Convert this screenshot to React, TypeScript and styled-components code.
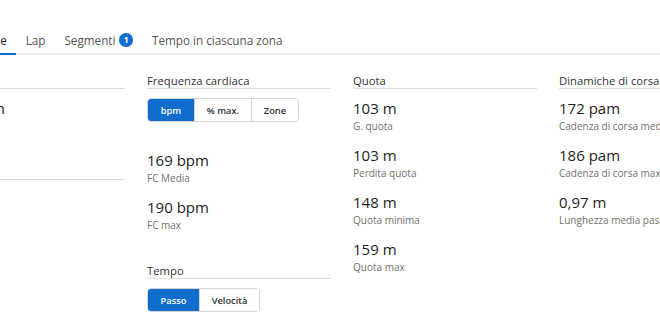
import React from "react";
import styled, { createGlobalStyle } from "styled-components";

const Global = createGlobalStyle`
  html, body { margin: 0; padding: 0; background: #fff; overflow: hidden; }
  body { font-family: "Open Sans", "Noto Sans", sans-serif; color: #222; }
`;

const BLUE = "#0e6dcd";

const Page = styled.div`
  width: 660px;
  height: 330px;
  overflow: hidden;
`;

const Inner = styled.div`
  margin-left: -59px;
  width: max-content;
  padding-top: 32px;
`;

const TabBar = styled.nav`
  display: flex;
  border-bottom: 2px solid #ececec;
  width: 1000px;
`;

const Tab = styled.div<{ $active?: boolean }>`
  display: flex;
  align-items: center;
  gap: 4px;
  padding: 0 9.5px 5px;
  margin-bottom: -2px;
  font-size: 11.7px;
  line-height: 16px;
  color: ${(p) => (p.$active ? "#222" : "#555")};
  border-bottom: 2px solid ${(p) => (p.$active ? BLUE : "transparent")};
`;

const Badge = styled.span`
  display: inline-flex;
  align-items: center;
  justify-content: center;
  width: 13.5px;
  height: 13.5px;
  border-radius: 50%;
  background: ${BLUE};
  color: #fff;
  font-size: 8.5px;
  font-weight: 700;
  line-height: 1;
`;

const Grid = styled.div`
  display: grid;
  grid-template-columns: repeat(4, 184px);
  column-gap: 22px;
  margin-top: 19px;
  align-items: start;
`;

const Column = styled.div`
  display: flex;
  flex-direction: column;
  gap: 32px;
`;

const Section = styled.section``;

const Header = styled.h3`
  margin: 0;
  font-size: 11.3px;
  font-weight: 400;
  line-height: 14px;
  color: #333;
  border-bottom: 1px solid #dedede;
  white-space: nowrap;
`;

const Body = styled.div`
  display: flex;
  flex-direction: column;
  gap: 12px;
  padding-top: 9px;
`;

const Toggle = styled.div`
  display: inline-flex;
  align-self: flex-start;
  border: 1px solid #d4d4d4;
  border-radius: 4px;
  overflow: hidden;
  margin-bottom: 16px;
`;

const ToggleBtn = styled.div<{ $active?: boolean; $w: number }>`
  width: ${(p) => p.$w}px;
  height: 22px;
  display: flex;
  align-items: center;
  justify-content: center;
  font-size: 9.3px;
  font-weight: 600;
  color: ${(p) => (p.$active ? "#fff" : "#333")};
  background: ${(p) => (p.$active ? BLUE : "#fff")};
  & + & { border-left: 1px solid #d4d4d4; }
`;

const Stat = styled.div`
  display: flex;
  flex-direction: column;
  white-space: nowrap;
`;

const Value = styled.div`
  font-size: 15px;
  line-height: 21px;
  color: #1e1e1e;
`;

const Label = styled.div`
  font-size: 10px;
  line-height: 14px;
  color: #707070;
`;

type S = [string, string];

const StatList = ({ items }: { items: S[] }) => (
  <>
    {items.map(([v, l]) => (
      <Stat key={l}>
        <Value>{v}</Value>
        <Label>{l}</Label>
      </Stat>
    ))}
  </>
);

export default function App() {
  return (
    <Page>
      <Global />
      <Inner>
        <TabBar>
          <Tab $active>Statistiche</Tab>
          <Tab>Lap</Tab>
          <Tab>
            Segmenti <Badge>1</Badge>
          </Tab>
          <Tab>Tempo in ciascuna zona</Tab>
        </TabBar>
        <Grid>
          <Column>
            <Section>
              <Header>Distanza</Header>
              <Body>
                <StatList items={[["10,01 km", "Distanza"]]} />
              </Body>
            </Section>
            <Section>
              <Header>Calorie</Header>
              <Body>
                <StatList items={[["", ""]]} />
              </Body>
            </Section>
          </Column>
          <Column>
            <Section>
              <Header>Frequenza cardiaca</Header>
              <Body>
                <Toggle>
                  <ToggleBtn $active $w={46}>bpm</ToggleBtn>
                  <ToggleBtn $w={56}>% max.</ToggleBtn>
                  <ToggleBtn $w={46}>Zone</ToggleBtn>
                </Toggle>
                <StatList
                  items={[
                    ["169 bpm", "FC Media"],
                    ["190 bpm", "FC max"],
                  ]}
                />
              </Body>
            </Section>
            <Section>
              <Header>Tempo</Header>
              <Body>
                <Toggle>
                  <ToggleBtn $active $w={51}>Passo</ToggleBtn>
                  <ToggleBtn $w={59}>Velocità</ToggleBtn>
                </Toggle>
              </Body>
            </Section>
          </Column>
          <Column>
            <Section>
              <Header>Quota</Header>
              <Body>
                <StatList
                  items={[
                    ["103 m", "G. quota"],
                    ["103 m", "Perdita quota"],
                    ["148 m", "Quota minima"],
                    ["159 m", "Quota max"],
                  ]}
                />
              </Body>
            </Section>
          </Column>
          <Column>
            <Section>
              <Header>Dinamiche di corsa</Header>
              <Body>
                <StatList
                  items={[
                    ["172 pam", "Cadenza di corsa media"],
                    ["186 pam", "Cadenza di corsa max"],
                    ["0,97 m", "Lunghezza media passo"],
                  ]}
                />
              </Body>
            </Section>
          </Column>
        </Grid>
      </Inner>
    </Page>
  );
}
